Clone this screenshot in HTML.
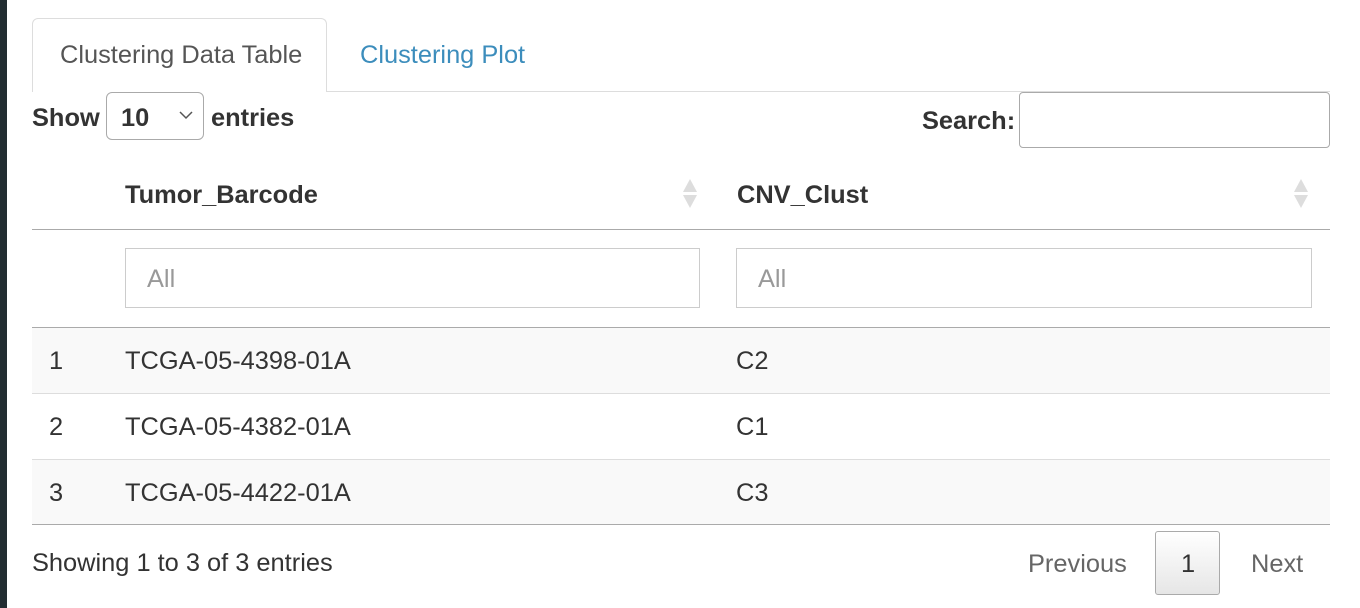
<!DOCTYPE html>
<html><head><style>
body{margin:0;width:1360px;height:608px;background:#fff;font-family:"Liberation Sans",sans-serif;color:#333;position:relative;overflow:hidden}
.a{position:absolute;white-space:nowrap}
.bar{left:0;top:0;width:7px;height:608px;background:#222d32}
.tab{left:32px;top:18px;width:295px;height:74px;border:1px solid #ddd;border-bottom:none;border-radius:6px 6px 0 0;background:#fff;box-sizing:border-box}
.b{font-weight:bold}
.t{font-size:25.4px;line-height:24px}
.inp{border:1px solid #ccc;box-sizing:border-box;background:#fff}
.ph{color:#999}
</style></head><body>
<div class="a bar"></div>
<div class="a" style="left:326px;top:91px;width:1004px;height:1px;background:#ddd"></div>
<div class="a tab"></div>
<div class="a t" style="left:60px;top:43px;color:#555">Clustering Data Table</div>
<div class="a t" style="left:360px;top:43px;color:#3c8dbc">Clustering Plot</div>
<div class="a t b" style="left:32px;top:106px">Show</div>
<div class="a inp" style="left:106px;top:92px;width:98px;height:48px;border-radius:6px;border-color:#aaa"></div>
<div class="a t b" style="left:121px;top:106px">10</div>
<svg class="a" style="left:178px;top:110px" width="16" height="10"><path d="M2 2 L8 8 L14 2" fill="none" stroke="#555" stroke-width="1.5"/></svg>
<div class="a t b" style="left:211px;top:106px">entries</div>
<div class="a t b" style="left:922px;top:109px">Search:</div>
<div class="a inp" style="left:1019px;top:92px;width:311px;height:56px;border-radius:4px;border-color:#aaa"></div>
<div class="a t b" style="left:125px;top:183px">Tumor_Barcode</div>
<div class="a t b" style="left:737px;top:183px">CNV_Clust</div>
<svg class="a" style="left:682px;top:178px" width="16" height="32"><path d="M1 14 L8 1 L15 14Z M1 17 L8 30 L15 17Z" fill="#ddd"/></svg>
<svg class="a" style="left:1293px;top:178px" width="16" height="32"><path d="M1 14 L8 1 L15 14Z M1 17 L8 30 L15 17Z" fill="#ddd"/></svg>
<div class="a" style="left:32px;top:229px;width:1298px;height:1px;background:#aaa"></div>
<div class="a inp" style="left:125px;top:248px;width:575px;height:60px"></div>
<div class="a t ph" style="left:147px;top:267px">All</div>
<div class="a inp" style="left:736px;top:248px;width:576px;height:60px"></div>
<div class="a t ph" style="left:758px;top:267px">All</div>
<div class="a" style="left:32px;top:327px;width:1298px;height:1px;background:#aaa"></div>
<div class="a" style="left:32px;top:328px;width:1298px;height:65px;background:#f9f9f9;border-bottom:1px solid #ddd"></div>
<div class="a" style="left:32px;top:394px;width:1298px;height:65px;background:#fff;border-bottom:1px solid #ddd"></div>
<div class="a" style="left:32px;top:460px;width:1298px;height:64px;background:#f9f9f9"></div>
<div class="a" style="left:32px;top:524px;width:1298px;height:1px;background:#aaa"></div>
<div class="a t" style="left:49px;top:349px">1</div><div class="a t" style="left:125px;top:349px">TCGA-05-4398-01A</div><div class="a t" style="left:736px;top:349px">C2</div>
<div class="a t" style="left:49px;top:415px">2</div><div class="a t" style="left:125px;top:415px">TCGA-05-4382-01A</div><div class="a t" style="left:736px;top:415px">C1</div>
<div class="a t" style="left:49px;top:481px">3</div><div class="a t" style="left:125px;top:481px">TCGA-05-4422-01A</div><div class="a t" style="left:736px;top:481px">C3</div>
<div class="a t" style="left:32px;top:551px">Showing 1 to 3 of 3 entries</div>
<div class="a t" style="left:1028px;top:552px;color:#666">Previous</div>
<div class="a" style="left:1155px;top:531px;width:65px;height:64px;box-sizing:border-box;border:1px solid #aaa;border-radius:3px;background:linear-gradient(#fff,#e6e6e6)"></div>
<div class="a t" style="left:1181px;top:552px">1</div>
<div class="a t" style="left:1251px;top:552px;color:#666">Next</div>
</body></html>
